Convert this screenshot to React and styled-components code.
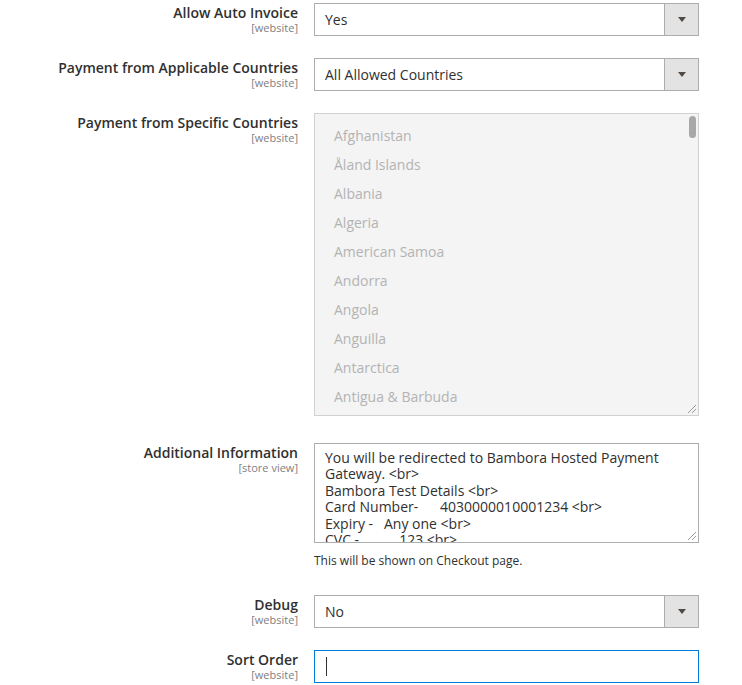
import React from 'react';
import styled, { createGlobalStyle } from 'styled-components';

const GlobalStyle = createGlobalStyle`
  html, body {
    margin: 0;
    padding: 0;
    background: #ffffff;
  }
  body {
    font-family: 'Open Sans', 'Helvetica Neue', Arial, sans-serif;
    color: #303030;
  }
`;

const Form = styled.div`
  padding-top: 3px;
  display: flex;
  flex-direction: column;
`;

const Row = styled.div`
  display: grid;
  grid-template-columns: 298px 385px;
  column-gap: 16px;
  margin-bottom: ${props => props.$gap ?? 22}px;
`;

const Label = styled.div`
  text-align: right;
  padding-top: 1px;
`;

const Title = styled.div`
  font-size: 14px;
  font-weight: 600;
  line-height: 18px;
  color: #303030;
`;

const Scope = styled.div`
  font-size: 11px;
  line-height: 11px;
  color: #808080;
`;

const Control = styled.div`
  display: flex;
  flex-direction: column;
`;

const SelectBox = styled.div`
  height: 33px;
  box-sizing: border-box;
  border: 1px solid #adadad;
  background: #ffffff;
  display: flex;
  align-items: stretch;
`;

const SelectValue = styled.div`
  flex: 1;
  padding: 0 10px;
  font-size: 14px;
  line-height: 31px;
  color: #303030;
`;

const ArrowBox = styled.div`
  width: 33px;
  border-left: 1px solid #adadad;
  background: #e3e3e3;
  display: flex;
  align-items: center;
  justify-content: center;
`;

const Caret = styled.span`
  width: 0;
  height: 0;
  border-left: 4px solid transparent;
  border-right: 4px solid transparent;
  border-top: 5px solid #514943;
`;

const MultiBox = styled.div`
  position: relative;
  height: 303px;
  box-sizing: border-box;
  border: 1px solid #d1d1d1;
  background: #f4f4f4;
  overflow: hidden;
  padding: 7px 0 0 19px;
`;

const Option = styled.div`
  font-size: 14px;
  line-height: 29px;
  color: #b3b3b3;
`;

const Thumb = styled.div`
  position: absolute;
  top: 2px;
  right: 2px;
  width: 7px;
  height: 22px;
  border-radius: 4px;
  background: #a8a8a8;
`;

const Grip = styled.svg`
  position: absolute;
  right: 1px;
  bottom: 1px;
`;

const TextBox = styled.div`
  position: relative;
  height: 100px;
  box-sizing: border-box;
  border: 1px solid #adadad;
  background: #ffffff;
  overflow: hidden;
  padding: 6px 10px 0;
`;

const AreaText = styled.div`
  font-size: 14px;
  line-height: 16.4px;
  color: #303030;
  white-space: pre-wrap;
`;

const Note = styled.div`
  margin-top: 9px;
  font-size: 12px;
  line-height: 18px;
  color: #303030;
`;

const InputBox = styled.div`
  height: 33px;
  box-sizing: border-box;
  border: 1px solid #007bdb;
  background: #ffffff;
  display: flex;
  align-items: center;
  padding-left: 11px;
`;

const TextCaret = styled.span`
  width: 1px;
  height: 19px;
  background: #303030;
`;

const countries = [
  'Afghanistan',
  'Åland Islands',
  'Albania',
  'Algeria',
  'American Samoa',
  'Andorra',
  'Angola',
  'Anguilla',
  'Antarctica',
  'Antigua & Barbuda',
  'Argentina',
];

const info = [
  'You will be redirected to Bambora Hosted Payment',
  'Gateway. <br>',
  'Bambora Test Details <br>',
  'Card Number-      4030000010001234 <br>',
  'Expiry -   Any one <br>',
  'CVC -           123 <br>',
];

const ResizeGrip = () => (
  <Grip width="11" height="11" viewBox="0 0 11 11">
    <line x1="10" y1="2" x2="2" y2="10" stroke="#9a9a9a" strokeWidth="1" />
    <line x1="10" y1="6" x2="6" y2="10" stroke="#9a9a9a" strokeWidth="1" />
  </Grip>
);

const Field = ({ title, scope, gap, children }) => (
  <Row $gap={gap}>
    <Label>
      <Title>{title}</Title>
      <Scope>[{scope}]</Scope>
    </Label>
    <Control>{children}</Control>
  </Row>
);

const Select = ({ value }) => (
  <SelectBox>
    <SelectValue>{value}</SelectValue>
    <ArrowBox>
      <Caret />
    </ArrowBox>
  </SelectBox>
);

export default function App() {
  return (
    <>
      <GlobalStyle />
      <Form>
        <Field title="Allow Auto Invoice" scope="website">
          <Select value="Yes" />
        </Field>
        <Field title="Payment from Applicable Countries" scope="website">
          <Select value="All Allowed Countries" />
        </Field>
        <Field title="Payment from Specific Countries" scope="website" gap={27}>
          <MultiBox>
            {countries.map(c => (
              <Option key={c}>{c}</Option>
            ))}
            <Thumb />
            <ResizeGrip />
          </MultiBox>
        </Field>
        <Field title="Additional Information" scope="store view" gap={25}>
          <TextBox>
            <AreaText>{info.join('\n')}</AreaText>
            <ResizeGrip />
          </TextBox>
          <Note>This will be shown on Checkout page.</Note>
        </Field>
        <Field title="Debug" scope="website">
          <Select value="No" />
        </Field>
        <Field title="Sort Order" scope="website" gap={0}>
          <InputBox>
            <TextCaret />
          </InputBox>
        </Field>
      </Form>
    </>
  );
}
